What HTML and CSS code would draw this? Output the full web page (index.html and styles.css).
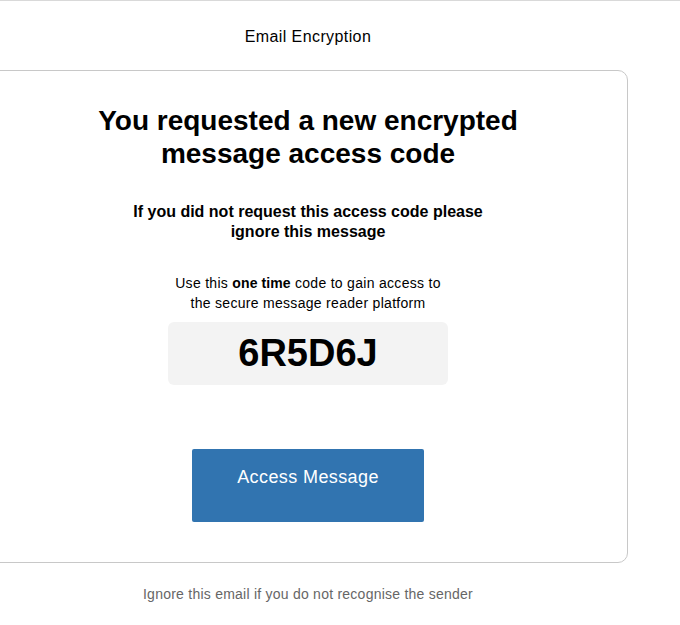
FILE: index.html
```html
<!DOCTYPE html>
<html>
<head>
<meta charset="utf-8">
<link rel="stylesheet" href="styles.css">
</head>
<body>
<div class="topline"></div>
<div class="wrap">
  <div class="brand">Email Encryption</div>
  <div class="card">
    <h1 class="title">You requested a new encrypted<br>message access code</h1>
    <p class="warn">If you did not request this access code please<br>ignore this message</p>
    <p class="info">Use this <b>one time</b> code to gain access to<br>the secure message reader platform</p>
    <div class="code">6R5D6J</div>
    <a class="btn" href="#">Access Message</a>
  </div>
  <p class="footer">Ignore this email if you do not recognise the sender</p>
</div>
</body>
</html>
```
FILE: styles.css
```css
html, body {
  margin: 0;
  padding: 0;
  background: #fff;
  font-family: "Liberation Sans", Arial, sans-serif;
  color: #000;
}
.topline {
  height: 1px;
  background: #d9d9d9;
}
.wrap {
  width: 640px;
  margin-left: -12px;
  display: flex;
  flex-direction: column;
  align-items: stretch;
}
.brand {
  text-align: center;
  font-size: 16px;
  line-height: 20px;
  letter-spacing: 0.4px;
  padding-top: 26px;
  box-sizing: border-box;
  height: 69px;
}
.card {
  border: 1px solid #c8c8c8;
  border-radius: 10px;
  height: 493px;
  box-sizing: border-box;
  display: flex;
  flex-direction: column;
  align-items: center;
  text-align: center;
}
.title {
  margin: 33px 0 0;
  font-size: 28px;
  line-height: 33px;
  font-weight: bold;
}
.warn {
  margin: 32px 0 0;
  font-size: 16px;
  line-height: 20px;
  font-weight: bold;
}
.info {
  margin: 31px 0 0;
  font-size: 14px;
  line-height: 20px;
  letter-spacing: 0.3px;
}
.info b {
  letter-spacing: 0.1px;
}
.code {
  margin-top: 9px;
  width: 280px;
  height: 63px;
  background: #f3f3f3;
  border-radius: 6px;
  font-size: 38px;
  font-weight: bold;
  line-height: 63px;
}
.btn {
  margin-top: 64px;
  width: 232px;
  height: 73px;
  box-sizing: border-box;
  padding-top: 18px;
  background: #3174b0;
  border-radius: 2px;
  color: #fff;
  font-size: 18px;
  line-height: 21px;
  letter-spacing: 0.4px;
  text-decoration: none;
}
.footer {
  margin: 21px 0 0;
  text-align: center;
  font-size: 14px;
  line-height: 20px;
  letter-spacing: 0.24px;
  color: #666;
}
```
